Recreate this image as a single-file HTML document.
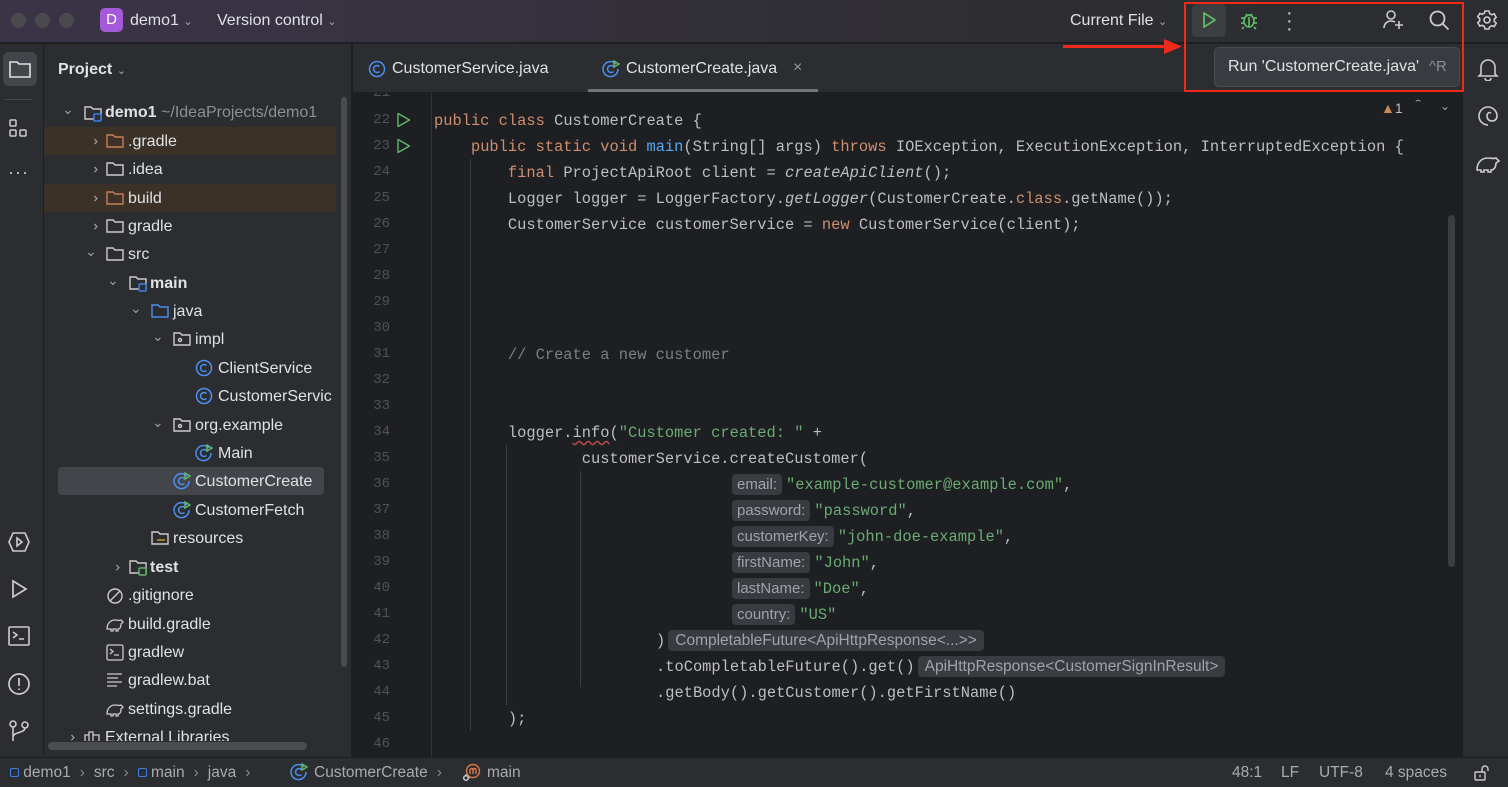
<!DOCTYPE html>
<html><head><meta charset="utf-8"><style>
*{margin:0;padding:0;box-sizing:border-box}
body{width:1508px;height:787px;overflow:hidden;background:#1e1f22;font-family:"Liberation Sans",sans-serif;color:#dfe1e5;position:relative}
.abs{position:absolute}
#title{left:0;top:0;width:1508px;height:43px;background:linear-gradient(90deg,#3b3346 0%,#37323f 30%,#2f2e33 60%,#2b2d30 100%);border-bottom:1px solid #1e1f22}
.tl{width:15px;height:15px;border-radius:50%;background:#4a4a4e;top:13px}
.tt{font-size:16px;color:#dfe1e5;top:12px}
#lstrip{left:0;top:44px;width:44px;height:713px;background:#2b2d30;border-right:1px solid #1e1f22}
#proj{left:44px;top:44px;width:308px;height:713px;background:#2b2d30;border-right:1px solid #1e1f22}
#tabs{left:353px;top:44px;width:1109px;height:49px;background:#2b2d30;border-bottom:1px solid #1e1f22}
#rstrip{left:1462px;top:44px;width:46px;height:713px;background:#2b2d30;border-left:1px solid #1e1f22}
#status{left:0;top:757px;width:1508px;height:30px;background:#2b2d30;border-top:1px solid #1e1f22;font-size:15.5px;color:#a8abb0}
.row{position:absolute;height:28px;font-size:16px;line-height:28px;color:#dfe1e5;white-space:nowrap}
.chev{position:absolute;font-size:14px;color:#9da0a6}
.ln{position:absolute;width:40px;text-align:right;left:350px;font-family:"Liberation Mono",monospace;font-size:14px;color:#4e5157;height:26px;line-height:26px}
.cl{position:absolute;left:434px;font-family:"Liberation Mono",monospace;font-size:15.4px;color:#bcbec4;white-space:pre;height:26px;line-height:26px}
.k{color:#cf8e6d}.s{color:#6aab73}.f{color:#56a8f5}.i{font-style:italic}.c{color:#7a7e85}
.h{font-family:"Liberation Sans",sans-serif;font-size:15px;color:#a0a3a9;background:#393b40;border-radius:4px;padding:2px 5px;margin-right:4px}
.guide{position:absolute;width:1px;background:#3a3c40}
svg{position:absolute}
.sep{color:#888;margin:0 9px}
</style></head><body>
<div id="title" class="abs">
<div class="abs tl" style="left:11px"></div><div class="abs tl" style="left:35px"></div><div class="abs tl" style="left:59px"></div>
<div class="abs" style="left:100px;top:8px;width:23px;height:24px;border-radius:5px;background:#a45ad8;color:#fff;font-size:15px;text-align:center;line-height:24px">D</div>
<div class="abs tt" style="left:130px">demo1 <span style="font-size:11px;color:#aaa">&#8964;</span></div>
<div class="abs tt" style="left:217px">Version control <span style="font-size:11px;color:#aaa">&#8964;</span></div>
<div class="abs tt" style="left:1070px">Current File <span style="font-size:11px;color:#aaa">&#8964;</span></div>
<div class="abs" style="left:1192px;top:4px;width:34px;height:33px;border-radius:5px;background:#3c3e42"></div>
<svg style="left:1199px;top:10px" width="20" height="20" viewBox="0 0 20 20"><path d="M5 3 L16 10 L5 17 Z" fill="none" stroke="#5fb865" stroke-width="1.8" stroke-linejoin="round"/></svg>
<svg style="left:1238px;top:9px" width="22" height="22" viewBox="0 0 22 22" fill="none" stroke="#5fb865" stroke-width="1.7"><ellipse cx="11" cy="12" rx="5" ry="6"/><path d="M8 5l1.5 2M14 5l-1.5 2M3 9h3M16 9h3M3 14h3M16 14h3M6 18l-2 2M16 18l2 2M11 8v10"/></svg>
<div class="abs" style="left:1286px;top:9px;color:#ccc;font-size:20px;line-height:8px">·<br>·<br>·</div>
<svg style="left:1381px;top:8px" width="24" height="24" viewBox="0 0 24 24" fill="none" stroke="#ccc" stroke-width="1.6"><circle cx="10" cy="7" r="4"/><path d="M3 20c0-4 3-7 7-7 2 0 3 .5 4 1M18 13v8M14 17h8"/></svg>
<svg style="left:1428px;top:9px" width="23" height="23" viewBox="0 0 23 23" fill="none" stroke="#ccc" stroke-width="1.8"><circle cx="9.5" cy="9.5" r="7"/><path d="M14.5 14.5l6 6"/></svg>
<svg style="left:1476px;top:9px" width="22" height="22" viewBox="0 0 22 22" fill="none" stroke="#ccc" stroke-width="1.6"><circle cx="11" cy="11" r="3"/><path d="M9 2h4l.6 2.5 2.2 1.2 2.4-.8 2 3.4-1.9 1.7v2.4l1.9 1.7-2 3.4-2.4-.8-2.2 1.2L13 20H9l-.6-2.5-2.2-1.2-2.4.8-2-3.4 1.9-1.7V9.6L1.8 7.9l2-3.4 2.4.8 2.2-1.2z"/></svg>
</div>

<div id="lstrip" class="abs">
<div class="abs" style="left:3px;top:8px;width:34px;height:34px;border-radius:6px;background:#43454a"></div>
<svg style="left:8px;top:14px" width="24" height="22" viewBox="0 0 24 22" fill="none" stroke="#dfe1e5" stroke-width="1.6"><path d="M2 4h7l2 2h11v13H2z"/></svg>
<div class="abs" style="left:5px;top:55px;width:28px;height:1px;background:#43454a"></div>
<svg style="left:8px;top:74px" width="22" height="22" viewBox="0 0 22 22" fill="none" stroke="#ccc" stroke-width="1.5"><rect x="2" y="2" width="6" height="6" rx="1"/><rect x="2" y="12" width="6" height="6" rx="1"/><rect x="12" y="12" width="6" height="6" rx="1"/></svg>
<div class="abs" style="left:8px;top:118px;color:#ccc;font-size:18px;letter-spacing:1px">···</div>
<svg style="left:7px;top:486px" width="24" height="24" viewBox="0 0 24 24" fill="none" stroke="#ccc" stroke-width="1.6"><path d="M6 3h12l4 9-4 9H6L2 12z"/><path d="M10 8l5 4-5 4z"/></svg>
<svg style="left:8px;top:534px" width="22" height="22" viewBox="0 0 22 22" fill="none" stroke="#ccc" stroke-width="1.7"><path d="M5 3l13 8-13 8z"/></svg>
<svg style="left:7px;top:581px" width="24" height="22" viewBox="0 0 24 22" fill="none" stroke="#ccc" stroke-width="1.6"><rect x="2" y="2" width="20" height="18" rx="1"/><path d="M6 7l4 3-4 3M12 14h5"/></svg>
<svg style="left:7px;top:628px" width="24" height="24" viewBox="0 0 24 24" fill="none" stroke="#ccc" stroke-width="1.7"><circle cx="12" cy="12" r="10"/><path d="M12 6v8M12 16.5v1.5"/></svg>
<svg style="left:7px;top:675px" width="24" height="24" viewBox="0 0 24 24" fill="none" stroke="#ccc" stroke-width="1.6"><circle cx="6" cy="5" r="3"/><circle cx="18" cy="6" r="3"/><path d="M6 8v14M18 9c0 5-12 4-12 9"/></svg>
</div>

<div id="proj" class="abs">
<div class="abs" style="left:14px;top:17px;font-size:16px;font-weight:bold">Project <span style="font-size:11px;font-weight:normal;color:#aaa">&#8964;</span></div>
<div class="abs" style="left:0;top:83px;width:292px;height:28px;background:#3b3126"></div>
<div class="abs" style="left:0;top:140px;width:292px;height:28px;background:#3b3126"></div>
<div class="abs" style="left:14px;top:423px;width:266px;height:28px;background:#43454a;border-radius:4px"></div>
<div class="abs" style="left:297px;top:53px;width:6px;height:570px;background:#4a4c50;border-radius:3px"></div>
<div class="abs" style="left:4px;top:698px;width:259px;height:8px;background:#4a4c50;border-radius:4px"></div>
</div>

<svg style="left:84px;top:104px" width="20" height="18" viewBox="0 0 20 18" fill="none"><path d="M1 3h6l2 2h8v10H1z" stroke="#ccc" stroke-width="1.4"/><rect x="10" y="10" width="7" height="7" rx="1" fill="#2b2d30" stroke="#3d7ee8" stroke-width="1.5"/></svg>
<div class="row" style="left:105px;top:99px"><b>demo1</b> <span style="color:#8c8f94">~/IdeaProjects/demo1</span></div>
<div style="position:absolute;left:0;top:0">
<span class="chev" style="left:62px;top:101px">&#8964;</span>
<span class="chev" style="left:87px;top:133px;transform:rotate(-90deg)">&#8964;</span>
<span class="chev" style="left:87px;top:161px;transform:rotate(-90deg)">&#8964;</span>
<span class="chev" style="left:87px;top:190px;transform:rotate(-90deg)">&#8964;</span>
<span class="chev" style="left:87px;top:218px;transform:rotate(-90deg)">&#8964;</span>
<span class="chev" style="left:85px;top:243px">&#8964;</span>
<span class="chev" style="left:107px;top:272px">&#8964;</span>
<span class="chev" style="left:130px;top:300px">&#8964;</span>
<span class="chev" style="left:152px;top:328px">&#8964;</span>
<span class="chev" style="left:152px;top:414px">&#8964;</span>
<span class="chev" style="left:109px;top:559px;transform:rotate(-90deg)">&#8964;</span>
<span class="chev" style="left:64px;top:729px;transform:rotate(-90deg)">&#8964;</span>
</div>
<svg style="left:106px;top:133px" width="18" height="16" viewBox="0 0 18 16" fill="none" stroke="#c77d55" stroke-width="1.4"><path d="M1 2h6l2 2h8v10H1z"/></svg>
<svg style="left:106px;top:161px" width="18" height="16" viewBox="0 0 18 16" fill="none" stroke="#ccc" stroke-width="1.4"><path d="M1 2h6l2 2h8v10H1z"/></svg>
<svg style="left:106px;top:190px" width="18" height="16" viewBox="0 0 18 16" fill="none" stroke="#c77d55" stroke-width="1.4"><path d="M1 2h6l2 2h8v10H1z"/></svg>
<svg style="left:106px;top:218px" width="18" height="16" viewBox="0 0 18 16" fill="none" stroke="#ccc" stroke-width="1.4"><path d="M1 2h6l2 2h8v10H1z"/></svg>
<svg style="left:106px;top:246px" width="18" height="16" viewBox="0 0 18 16" fill="none" stroke="#ccc" stroke-width="1.4"><path d="M1 2h6l2 2h8v10H1z"/></svg>
<svg style="left:129px;top:275px" width="20" height="18" viewBox="0 0 20 18" fill="none"><path d="M1 2h6l2 2h8v10H1z" stroke="#ccc" stroke-width="1.4"/><rect x="10" y="9" width="7" height="7" rx="1" fill="#2b2d30" stroke="#3d7ee8" stroke-width="1.5"/></svg>
<svg style="left:151px;top:303px" width="18" height="16" viewBox="0 0 18 16" fill="none" stroke="#4d8ff0" stroke-width="1.4"><path d="M1 2h6l2 2h8v10H1z"/></svg>
<svg style="left:173px;top:331px" width="18" height="16" viewBox="0 0 18 16" fill="none" stroke="#ccc" stroke-width="1.4"><path d="M1 2h6l2 2h8v10H1z"/><circle cx="7" cy="9" r="1.5"/></svg>
<svg style="left:173px;top:417px" width="18" height="16" viewBox="0 0 18 16" fill="none" stroke="#ccc" stroke-width="1.4"><path d="M1 2h6l2 2h8v10H1z"/><circle cx="7" cy="9" r="1.5"/></svg>
<svg style="left:151px;top:530px" width="18" height="16" viewBox="0 0 18 16" fill="none" stroke="#ccc" stroke-width="1.4"><path d="M1 2h6l2 2h8v10H1z"/><path d="M6 10h8" stroke="#c9a227"/></svg>
<svg style="left:129px;top:559px" width="20" height="18" viewBox="0 0 20 18" fill="none"><path d="M1 2h6l2 2h8v10H1z" stroke="#ccc" stroke-width="1.4"/><rect x="10" y="9" width="7" height="7" rx="1" fill="#2b2d30" stroke="#5fb865" stroke-width="1.5"/></svg>
<svg style="left:195px;top:359px" width="18" height="18" viewBox="0 0 18 18" fill="none" stroke="#4d8ff0" stroke-width="1.5"><circle cx="9" cy="9" r="7.5"/><path d="M11.5 6.5a3.5 3.5 0 1 0 0 5"/></svg>
<svg style="left:195px;top:387px" width="18" height="18" viewBox="0 0 18 18" fill="none" stroke="#4d8ff0" stroke-width="1.5"><circle cx="9" cy="9" r="7.5"/><path d="M11.5 6.5a3.5 3.5 0 1 0 0 5"/></svg>
<svg style="left:195px;top:444px" width="18" height="18" viewBox="0 0 18 18" fill="none" stroke="#4d8ff0" stroke-width="1.5"><path d="M14 4a7.5 7.5 0 1 0 2 5"/><path d="M11.5 6.5a3.5 3.5 0 1 0 0 5"/><path d="M12 1l5 3-5 3z" stroke="#5fb865"/></svg>
<svg style="left:173px;top:472px" width="18" height="18" viewBox="0 0 18 18" fill="none" stroke="#4d8ff0" stroke-width="1.5"><path d="M14 4a7.5 7.5 0 1 0 2 5"/><path d="M11.5 6.5a3.5 3.5 0 1 0 0 5"/><path d="M12 1l5 3-5 3z" stroke="#5fb865"/></svg>
<svg style="left:173px;top:501px" width="18" height="18" viewBox="0 0 18 18" fill="none" stroke="#4d8ff0" stroke-width="1.5"><path d="M14 4a7.5 7.5 0 1 0 2 5"/><path d="M11.5 6.5a3.5 3.5 0 1 0 0 5"/><path d="M12 1l5 3-5 3z" stroke="#5fb865"/></svg>
<svg style="left:106px;top:587px" width="18" height="18" viewBox="0 0 18 18" fill="none" stroke="#ccc" stroke-width="1.4"><circle cx="9" cy="9" r="7"/><path d="M4 14L14 4"/></svg>
<svg style="left:105px;top:615px" width="20" height="18" viewBox="0 0 20 18" fill="none" stroke="#ccc" stroke-width="1.3"><path d="M2 14c0-5 3-9 8-9 3 0 5 1 6 0l2 2-2 2c0 3-1 5-3 5v2h-2v-2H8v2H6v-2H4z"/></svg>
<svg style="left:106px;top:644px" width="18" height="17" viewBox="0 0 18 17" fill="none" stroke="#ccc" stroke-width="1.3"><rect x="1" y="1" width="16" height="15" rx="1.5"/><path d="M4 5l3 2.5-3 2.5M8 11h5"/></svg>
<svg style="left:106px;top:672px" width="18" height="16" viewBox="0 0 18 16" fill="none" stroke="#ccc" stroke-width="1.3"><path d="M1 2h15M1 6h11M1 10h15M1 14h10"/></svg>
<svg style="left:105px;top:700px" width="20" height="18" viewBox="0 0 20 18" fill="none" stroke="#ccc" stroke-width="1.3"><path d="M2 14c0-5 3-9 8-9 3 0 5 1 6 0l2 2-2 2c0 3-1 5-3 5v2h-2v-2H8v2H6v-2H4z"/></svg>
<svg style="left:84px;top:731px" width="18" height="10" viewBox="0 0 18 10" fill="none" stroke="#ccc" stroke-width="1.3"><path d="M1 10V4h4v6M5 10V1h4v9M9 10V4h6v6"/></svg>

<div class="row" style="left:128px;top:128px">.gradle</div>
<div class="row" style="left:128px;top:156px">.idea</div>
<div class="row" style="left:128px;top:185px">build</div>
<div class="row" style="left:128px;top:213px">gradle</div>
<div class="row" style="left:128px;top:241px">src</div>
<div class="row" style="left:150px;top:270px;font-weight:bold">main</div>
<div class="row" style="left:173px;top:298px">java</div>
<div class="row" style="left:195px;top:326px">impl</div>
<div class="row" style="left:218px;top:355px">ClientService</div>
<div class="row" style="left:218px;top:383px">CustomerServic</div>
<div class="row" style="left:195px;top:412px">org.example</div>
<div class="row" style="left:218px;top:440px">Main</div>
<div class="row" style="left:195px;top:468px">CustomerCreate</div>
<div class="row" style="left:195px;top:497px">CustomerFetch</div>
<div class="row" style="left:173px;top:525px">resources</div>
<div class="row" style="left:150px;top:554px;font-weight:bold">test</div>
<div class="row" style="left:128px;top:582px">.gitignore</div>
<div class="row" style="left:128px;top:611px">build.gradle</div>
<div class="row" style="left:128px;top:639px">gradlew</div>
<div class="row" style="left:128px;top:667px">gradlew.bat</div>
<div class="row" style="left:128px;top:696px">settings.gradle</div>
<div class="row" style="left:105px;top:724px;height:17px;overflow:hidden">External Libraries</div>

<div id="tabs" class="abs">
<svg style="left:15px;top:16px" width="18" height="18" viewBox="0 0 18 18" fill="none" stroke="#4d8ff0" stroke-width="1.5"><circle cx="9" cy="9" r="7.5"/><path d="M11.5 6.5a3.5 3.5 0 1 0 0 5"/></svg>
<div class="abs" style="left:39px;top:16px;font-size:16px">CustomerService.java</div>
<svg style="left:249px;top:16px" width="18" height="18" viewBox="0 0 18 18" fill="none" stroke="#4d8ff0" stroke-width="1.5"><path d="M14 4a7.5 7.5 0 1 0 2 5"/><path d="M11.5 6.5a3.5 3.5 0 1 0 0 5"/><path d="M12 1l5 3-5 3z" stroke="#5fb865"/></svg>
<div class="abs" style="left:273px;top:16px;font-size:16px">CustomerCreate.java</div>
<div class="abs" style="left:440px;top:15px;font-size:16px;color:#999">×</div>
<div class="abs" style="left:235px;top:45px;width:230px;height:3px;background:#6f737a"></div>
</div>

<div class="abs" style="left:431px;top:93px;width:1px;height:664px;background:#313337"></div>
<div class="ln" style="top:93px;height:8px;overflow:hidden;line-height:0">21</div>
<div class="ln" style="top:107px">22</div><div class="ln" style="top:133px">23</div><div class="ln" style="top:159px">24</div><div class="ln" style="top:185px">25</div><div class="ln" style="top:211px">26</div><div class="ln" style="top:237px">27</div><div class="ln" style="top:263px">28</div><div class="ln" style="top:289px">29</div><div class="ln" style="top:315px">30</div><div class="ln" style="top:341px">31</div><div class="ln" style="top:367px">32</div><div class="ln" style="top:393px">33</div><div class="ln" style="top:419px">34</div><div class="ln" style="top:445px">35</div><div class="ln" style="top:471px">36</div><div class="ln" style="top:497px">37</div><div class="ln" style="top:523px">38</div><div class="ln" style="top:549px">39</div><div class="ln" style="top:575px">40</div><div class="ln" style="top:601px">41</div><div class="ln" style="top:627px">42</div><div class="ln" style="top:653px">43</div><div class="ln" style="top:679px">44</div><div class="ln" style="top:705px">45</div><div class="ln" style="top:731px">46</div>
<svg style="left:396px;top:112px" width="16" height="16" viewBox="0 0 16 16"><path d="M2 1.5L13.5 8 2 14.5z" fill="none" stroke="#5fb865" stroke-width="1.4" stroke-linejoin="round"/></svg>
<svg style="left:396px;top:138px" width="16" height="16" viewBox="0 0 16 16"><path d="M2 1.5L13.5 8 2 14.5z" fill="none" stroke="#5fb865" stroke-width="1.4" stroke-linejoin="round"/></svg>

<div class="guide" style="left:470px;top:159px;height:572px"></div>
<div class="guide" style="left:506px;top:445px;height:260px"></div>
<div class="guide" style="left:580px;top:471px;height:216px"></div>

<div style="position:absolute;left:0;top:1px;width:1508px">
<div class="cl" style="top:107px"><span class="k">public class</span> CustomerCreate {</div>
<div class="cl" style="top:133px">    <span class="k">public static void</span> <span class="f">main</span>(String[] args) <span class="k">throws</span> IOException, ExecutionException, InterruptedException {</div>
<div class="cl" style="top:159px">        <span class="k">final</span> ProjectApiRoot client = <span class="i">createApiClient</span>();</div>
<div class="cl" style="top:185px">        Logger logger = LoggerFactory.<span class="i">getLogger</span>(CustomerCreate.<span class="k">class</span>.getName());</div>
<div class="cl" style="top:211px">        CustomerService customerService = <span class="k">new</span> CustomerService(client);</div>
<div class="cl" style="top:341px">        <span class="c">// Create a new customer</span></div>
<div class="cl" style="top:419px">        logger.<span style="text-decoration:underline wavy #b84a4a;text-underline-offset:3px">info</span>(<span class="s">"Customer created: "</span> +</div>
<div class="cl" style="top:445px">                customerService.createCustomer(</div>
<div class="cl" style="top:471px;left:732px"><span class="h">email:</span><span class="s">"example-customer@example.com"</span>,</div>
<div class="cl" style="top:497px;left:732px"><span class="h">password:</span><span class="s">"password"</span>,</div>
<div class="cl" style="top:523px;left:732px"><span class="h">customerKey:</span><span class="s">"john-doe-example"</span>,</div>
<div class="cl" style="top:549px;left:732px"><span class="h">firstName:</span><span class="s">"John"</span>,</div>
<div class="cl" style="top:575px;left:732px"><span class="h">lastName:</span><span class="s">"Doe"</span>,</div>
<div class="cl" style="top:601px;left:732px"><span class="h">country:</span><span class="s">"US"</span></div>
<div class="cl" style="top:627px;left:656px">)<span class="h" style="margin-left:3px;padding:2px 7px;font-size:15.5px">CompletableFuture&lt;ApiHttpResponse&lt;...&gt;&gt;</span></div>
<div class="cl" style="top:653px;left:656px">.toCompletableFuture().get()<span class="h" style="margin-left:3px;padding:2px 7px;font-size:15.5px">ApiHttpResponse&lt;CustomerSignInResult&gt;</span></div>
<div class="cl" style="top:679px;left:656px">.getBody().getCustomer().getFirstName()</div>
<div class="cl" style="top:705px">        );</div>
</div>

<div class="abs" style="left:1381px;top:100px;font-size:14px;color:#bbb"><span style="color:#c98a57">&#9650;</span>1</div>
<div class="abs" style="left:1416px;top:97px;font-size:13px;color:#aaa;transform:scaleX(1.3)">&#710;</div>
<div class="abs" style="left:1440px;top:99px;font-size:12px;color:#aaa">&#8964;</div>
<div class="abs" style="left:1448px;top:215px;width:7px;height:352px;background:#3c3e42;border-radius:4px"></div>

<div id="rstrip" class="abs">
<svg style="left:14px;top:13px" width="22" height="24" viewBox="0 0 22 24" fill="none" stroke="#ccc" stroke-width="1.6"><path d="M4 17V10a7 7 0 0 1 14 0v7l2 2H2z"/><path d="M8 21a3 3 0 0 0 6 0"/></svg>
<svg style="left:14px;top:61px" width="22" height="22" viewBox="0 0 22 22" fill="none" stroke="#ccc" stroke-width="1.6"><path d="M11 20a9 9 0 1 1 9-9c0 3-2 5-5 5s-5-2-5-5 2-4 4-3"/></svg>
<svg style="left:12px;top:108px" width="26" height="22" viewBox="0 0 26 22" fill="none" stroke="#ccc" stroke-width="1.6"><path d="M2 18c0-7 4-12 11-12 4 0 6 1 8 0l3 3-3 2c0 4-2 7-5 7v2h-3v-2H9v2H6v-2H4z"/></svg>
</div>

<div class="abs" style="left:1214px;top:47px;width:246px;height:40px;background:#393b40;border:1px solid #4a4c50;border-radius:5px"></div>
<div class="abs" style="left:1228px;top:58px;font-size:16px;color:#dfe1e5">Run 'CustomerCreate.java'</div>
<div class="abs" style="left:1429px;top:58px;font-size:15px;color:#8c8f94">^R</div>
<div class="abs" style="left:1184px;top:2px;width:280px;height:90px;border:2.5px solid #ef2a1c"></div>
<div class="abs" style="left:1063px;top:45px;width:105px;height:2.5px;background:#ef2a1c"></div>
<svg style="left:1164px;top:39px" width="18" height="15" viewBox="0 0 18 15"><path d="M0 0L18 7.5 0 15z" fill="#ef2a1c"/></svg>

<div id="status" class="abs">
<div class="abs" style="left:10px;top:6px;white-space:nowrap"><span style="display:inline-block;width:9px;height:9px;border:1.5px solid #3d7ee8;border-radius:2px"></span> demo1<span class="sep">›</span>src<span class="sep">›</span><span style="display:inline-block;width:9px;height:9px;border:1.5px solid #3d7ee8;border-radius:2px"></span> main<span class="sep">›</span>java<span class="sep">›</span></div>
<svg style="left:290px;top:5px" width="18" height="18" viewBox="0 0 18 18" fill="none" stroke="#4d8ff0" stroke-width="1.5"><path d="M14 4a7.5 7.5 0 1 0 2 5"/><path d="M11.5 6.5a3.5 3.5 0 1 0 0 5"/><path d="M12 1l5 3-5 3z" stroke="#5fb865"/></svg>
<div class="abs" style="left:314px;top:6px;white-space:nowrap">CustomerCreate<span class="sep">›</span></div>
<svg style="left:463px;top:5px" width="18" height="18" viewBox="0 0 18 18" fill="none" stroke="#d9774a" stroke-width="1.4"><circle cx="10" cy="8" r="6.5"/><path d="M7 11V6M7 7c1-2 3-2 3 0v4M10 7c1-2 3-2 3 0v4"/><path d="M3 12l3 3-3 3-3-3z" stroke="#ccc" fill="#2b2d30"/></svg>
<div class="abs" style="left:487px;top:6px">main</div>
<div class="abs" style="left:1232px;top:6px">48:1</div>
<div class="abs" style="left:1281px;top:6px">LF</div>
<div class="abs" style="left:1319px;top:6px">UTF-8</div>
<div class="abs" style="left:1385px;top:6px">4 spaces</div>
<svg style="left:1473px;top:6px" width="18" height="18" viewBox="0 0 18 18" fill="none" stroke="#ccc" stroke-width="1.4"><rect x="2" y="8" width="10" height="8" rx="1"/><path d="M9 8V5a3 3 0 0 1 6 0v2"/><path d="M7 11v2"/></svg>
</div>
</body></html>
